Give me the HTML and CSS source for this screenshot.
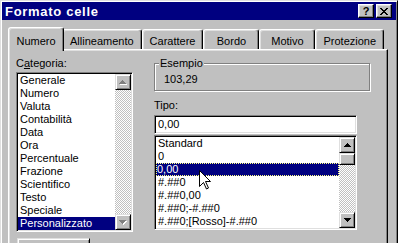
FILE: index.html
```html
<!DOCTYPE html>
<html lang="it">
  <head>
    <meta charset="UTF-8" />
    <meta name="viewport" content="width=device-width, initial-scale=1.0" />
    <title>Formato celle</title>
    <link rel="stylesheet" href="styles.css">
  </head>
  <body>
    <div class="window">
      <!-- Title bar -->
      <div class="titlebar">
        <span class="title">Formato celle</span>
        <div class="caption-buttons">
          <button class="caption-btn help">?</button>
          <button class="caption-btn">
            <svg width="8" height="7" viewBox="0 0 8 7">
              <path d="M0 0h2v1h1v1h2V1h1V0h2v1H7v1H6v1H5v1h1v1h1v1h1v1H6V6H5V5H3v1H2v1H0V6h1V5h1V4h1V3H2V2H1V1H0z" fill="#000" />
            </svg>
          </button>
        </div>
      </div>

      <!-- Tabs -->
      <div class="tabs">
        <div class="tab active">Numero</div>
        <div class="tab">Allineamento</div>
        <div class="tab">Carattere</div>
        <div class="tab">Bordo</div>
        <div class="tab">Motivo</div>
        <div class="tab">Protezione</div>
      </div>

      <div class="panel">
        <div class="columns">
          <!-- Category list -->
          <div class="col">
            <div class="label">C<span class="u">a</span>tegoria:</div>
            <div class="listbox category">
              <ul class="items">
                <li>Generale</li>
                <li>Numero</li>
                <li>Valuta</li>
                <li>Contabilità</li>
                <li>Data</li>
                <li>Ora</li>
                <li>Percentuale</li>
                <li>Frazione</li>
                <li>Scientifico</li>
                <li>Testo</li>
                <li>Speciale</li>
                <li class="selected">Personalizzato</li>
              </ul>
              <div class="vscroll">
                <div class="sbtn">
                  <svg width="8" height="5" viewBox="0 0 8 5">
                    <path d="M4 1h1v1h1v1h1v1h1v1H1V4h1V3h1V2h1z" fill="#fff" />
                    <path d="M3 0h1v1h1v1h1v1h1v1H0V3h1V2h1V1h1z" fill="#808080" />
                  </svg>
                </div>
                <div class="track"></div>
                <div class="sbtn">
                  <svg width="8" height="5" viewBox="0 0 8 5">
                    <path d="M1 1h7v1H7v1H6v1H5v1H4V4H3V3H2V2H1z" fill="#fff" />
                    <path d="M0 0h7v1H6v1H5v1H4v1H3V3H2V2H1V1H0z" fill="#808080" />
                  </svg>
                </div>
              </div>
            </div>
            <button class="btn"></button>
          </div>

          <!-- Sample and type -->
          <div class="col">
            <fieldset class="group">
              <legend>Esempio</legend>
              <div class="sample">103,29</div>
            </fieldset>

            <div class="label tipo">Tipo:</div>
            <div class="textbox">0,00</div>

            <div class="listbox formats">
              <ul class="items">
                <li>Standard</li>
                <li>0</li>
                <li class="selected focus">0,00
                  <svg class="cursor" width="13" height="20" viewBox="0 0 13 20">
                    <path d="M0.5 0.5V16.5L4.5 12.5L7.5 19L9.5 18L6.5 11.5H11.5Z" fill="#fff" stroke="#000" stroke-linejoin="miter" />
                  </svg>
                </li>
                <li>#.##0</li>
                <li>#.##0,00</li>
                <li>#.##0;-#.##0</li>
                <li>#.##0;[Rosso]-#.##0</li>
              </ul>
              <div class="vscroll">
                <div class="sbtn">
                  <svg width="7" height="4" viewBox="0 0 7 4">
                    <path d="M3 0h1v1h1v1h1v1h1v1H0V3h1V2h1V1h1z" fill="#000" />
                  </svg>
                </div>
                <div class="thumb"></div>
                <div class="track"></div>
                <div class="sbtn">
                  <svg width="7" height="4" viewBox="0 0 7 4">
                    <path d="M0 0h7v1H6v1H5v1H4v1H3V3H2V2H1V1H0z" fill="#000" />
                  </svg>
                </div>
              </div>
            </div>
          </div>
        </div>
      </div>
    </div>
  </body>
</html>
```

FILE: styles.css
```css
* {
  box-sizing: border-box;
}
html,
body {
  margin: 0;
  height: 100%;
  overflow: hidden;
}
body {
  background-color: #c0c0c0;
  color: #000;
  font: 11px/13px "Liberation Sans", Arial, sans-serif;
}

/* raised 3D edge used by window, buttons, tabs */
.window {
  width: 398px;
  height: 280px;
  padding: 1px;
  border: 1px solid;
  border-color: #dfdfdf #000 #000 #dfdfdf;
  box-shadow: inset 1px 1px #fff, inset -1px -1px #808080;
}

.titlebar {
  height: 18px;
  background-color: #000080;
  color: #fff;
  display: flex;
  align-items: center;
  justify-content: space-between;
  padding: 0 4px 0 3px;
}
.title {
  font-weight: bold;
  font-size: 13px;
  letter-spacing: 0.7px;
}
.caption-buttons {
  display: flex;
  gap: 2px;
}
.caption-btn {
  width: 16px;
  height: 14px;
  padding: 0;
  background-color: #c0c0c0;
  border: 1px solid;
  border-color: #fff #000 #000 #fff;
  box-shadow: inset -1px -1px #808080, inset 1px 1px #dfdfdf;
  display: flex;
  align-items: center;
  justify-content: center;
  font: bold 11px/11px "Liberation Sans", Arial, sans-serif;
  color: #000;
}

/* tabs */
.tabs {
  display: flex;
  align-items: flex-end;
  height: 22px;
  margin: 7px 0 0 6px;
  padding-left: 2px;
}
.tab {
  position: relative;
  height: 20px;
  min-width: 56px;
  padding: 5px 7px 0;
  text-align: center;
  white-space: nowrap;
  border: 1px solid;
  border-bottom: 0;
  border-color: #fff #000 transparent #fff;
  border-radius: 3px 3px 0 0;
  box-shadow: inset -1px 0 #808080, inset 1px 1px #dfdfdf;
}
.tab.active {
  height: 24px;
  margin: 0 -2px -2px;
  padding-top: 7px;
  background-color: #c0c0c0;
  z-index: 1;
}

.panel {
  width: 380px;
  margin-left: 6px;
  padding: 7px 0 0 7px;
  border: 1px solid;
  border-color: #fff #000 #000 #fff;
  box-shadow: inset -1px -1px #808080, inset 1px 1px #dfdfdf;
}
.columns {
  display: grid;
  grid-template-columns: 117px 216px;
  column-gap: 21px;
}
.label {
  margin-bottom: 2px;
}
.u {
  text-decoration: underline;
}

/* sunken boxes */
.listbox,
.textbox {
  background-color: #fff;
  border: 1px solid;
  border-color: #808080 #fff #fff #808080;
  box-shadow: inset 1px 1px #000, inset -1px -1px #dfdfdf;
}
.listbox {
  display: flex;
  padding: 1px;
}
.items {
  flex: 1;
  list-style: none;
  margin: 0;
  padding: 0;
  min-width: 0;
}
.items li {
  position: relative;
  height: 13px;
  padding-left: 2px;
  white-space: nowrap;
}
.items li.selected {
  background-color: #000080;
  color: #fff;
}
.items li.focus {
  outline: 1px dotted #ffff80;
  outline-offset: -1px;
  padding-left: 1px;
}
.cursor {
  position: absolute;
  left: 43px;
  top: 7px;
}
.category {
  height: 160px;
}
.formats {
  width: 203px;
  height: 95px;
  margin-top: 1px;
}

.vscroll {
  width: 16px;
  display: flex;
  flex-direction: column;
}
.sbtn,
.thumb,
.btn {
  background-color: #c0c0c0;
  border: 1px solid;
  border-color: #dfdfdf #000 #000 #dfdfdf;
  box-shadow: inset 1px 1px #fff, inset -1px -1px #808080;
}
.sbtn {
  height: 16px;
  display: flex;
  align-items: center;
  justify-content: center;
}
.thumb {
  height: 12px;
}
.track {
  flex: 1;
  background: repeating-conic-gradient(#c0c0c0 0 25%, #fff 0 50%) 0 0 / 2px 2px;
}

.btn {
  display: block;
  width: 73px;
  height: 23px;
  margin: 6px 0 0 1px;
}

/* group box */
.group {
  margin: 0;
  padding: 3px 8px 4px;
  border: 1px solid #808080;
  box-shadow: inset 1px 1px #fff, 1px 1px #fff;
}
.group legend {
  margin-left: -4px;
  padding: 0 1px;
  background-color: #c0c0c0;
}
.sample {
  padding-left: 1px;
}
.tipo {
  margin: 8px 0 3px;
}
.textbox {
  width: 203px;
  height: 19px;
  padding: 1px 3px;
  line-height: 15px;
}
```
